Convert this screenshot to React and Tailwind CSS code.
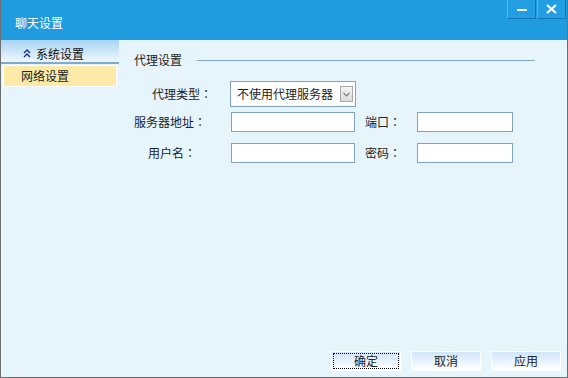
import { useState } from 'react';

const font = { fontFamily: '"Microsoft YaHei", "Noto Sans CJK SC", "Noto Sans", sans-serif' };

// full-width colon centred in its cell, as the original font draws it
function Colon() {
  return <span style={{ fontFamily: '"Noto Sans CJK JP", sans-serif' }}>：</span>;
}

function TitleButton({ children }) {
  return (
    <button className="w-[29px] h-[19px] flex items-center justify-center border border-t-0 border-[#5cb4ea] border-r-[#1577b8] border-b-[#1577b8] bg-[#239ee3]">
      {children}
    </button>
  );
}

function Field({ w }) {
  return <input className={`${w} h-[20px] bg-white border border-[#7ea3c4] outline-none text-[12px] px-1`} />;
}

function FootButton({ label, focused }) {
  return (
    <button className="w-[70px] h-[20px] border border-white bg-gradient-to-b from-[#cfe6fa] to-white flex items-center justify-center p-[1px]">
      <span
        className={`w-full h-full flex items-center justify-center text-[12px] text-[#222] leading-none ${
          focused ? 'border border-dotted border-black' : ''
        }`}
      >
        {label}
      </span>
    </button>
  );
}

export default function App() {
  const [active] = useState('网络设置');

  return (
    <div className="w-[568px] h-[378px] flex flex-col bg-[#e6f4fc] border-x border-b border-[#6e6e6e] overflow-hidden" style={font}>
      {/* title bar */}
      <div className="h-[40px] flex-shrink-0 bg-[#1f9be0] flex items-start justify-between">
        <div className="pl-[14px] pt-[15px] text-white text-[12px] leading-[16px]">聊天设置</div>
        <div className="flex gap-[1px] pr-[1px]">
          <TitleButton>
            <span className="block w-[10px] h-[2px] bg-white mt-[2px]" />
          </TitleButton>
          <TitleButton>
            <svg width="11" height="10" viewBox="0 0 11 10">
              <path d="M1 1 L10 9 M10 1 L1 9" stroke="white" strokeWidth="2.2" />
            </svg>
          </TitleButton>
        </div>
      </div>

      <div className="flex-1 flex min-h-0">
        {/* left nav */}
        <div className="w-[118px] flex-shrink-0 flex flex-col">
          <div className="h-[24px] bg-gradient-to-b from-[#a9d4f2] to-[#eef7fd] border-b-2 border-[#7eaad2] flex items-center pt-[5px] pl-[22px] gap-[5px]">
            <svg width="8" height="9" viewBox="0 0 8 9">
              <path d="M1 4 L4 1 L7 4 M1 8 L4 5 L7 8" stroke="#1c2f8c" strokeWidth="1.4" fill="none" />
            </svg>
            <span className="text-[12px] text-[#111] leading-none">系统设置</span>
          </div>
          <div className="mx-[2px] mt-[1px] h-[22px] bg-[#fde9a8] border border-white flex items-center pl-[17px] text-[12px] text-[#222]">
            {active}
          </div>
        </div>

        {/* content */}
        <div className="flex-1 flex flex-col pl-[15px] pt-[12px] text-[12px] text-[#222]">
          <div className="flex items-center pr-[32px] h-[16px]">
            <span>代理设置</span>
            <span className="flex-1 h-px bg-[#7ea8cf] ml-[15px]" />
          </div>

          <div className="flex items-center mt-[13px] h-[26px]">
            <span className="w-[96px] pl-[18px]">代理类型<Colon /></span>
            <div className="w-[126px] h-[26px] bg-white border border-[#7ea3c4] flex items-center justify-between pl-[6px] pr-[2px]">
              <span className="text-[12px]">不使用代理服务器</span>
              <span className="w-[13px] h-[16px] border border-[#a9a9a9] bg-gradient-to-b from-[#f4f4f4] to-[#dcdcdc] flex items-center justify-center">
                <svg width="7" height="5" viewBox="0 0 7 5">
                  <path d="M0.5 0.8 L3.5 3.8 L6.5 0.8" stroke="#777" strokeWidth="1.2" fill="none" />
                </svg>
              </span>
            </div>
          </div>

          <div className="flex items-center mt-[5px] h-[20px]">
            <span className="w-[97px]">服务器地址<Colon /></span>
            <Field w="w-[124px]" />
            <span className="w-[52px] ml-[10px]">端口<Colon /></span>
            <Field w="w-[96px]" />
          </div>

          <div className="flex items-center mt-[11px] h-[20px]">
            <span className="w-[97px] pl-[14px]">用户名<Colon /></span>
            <Field w="w-[124px]" />
            <span className="w-[52px] ml-[10px]">密码<Colon /></span>
            <Field w="w-[96px]" />
          </div>

          <div className="flex-1" />

          <div className="flex justify-end gap-[10px] pr-[6px] pb-[6px]">
            <FootButton label="确定" focused />
            <FootButton label="取消" />
            <FootButton label="应用" />
          </div>
        </div>
      </div>
    </div>
  );
}
